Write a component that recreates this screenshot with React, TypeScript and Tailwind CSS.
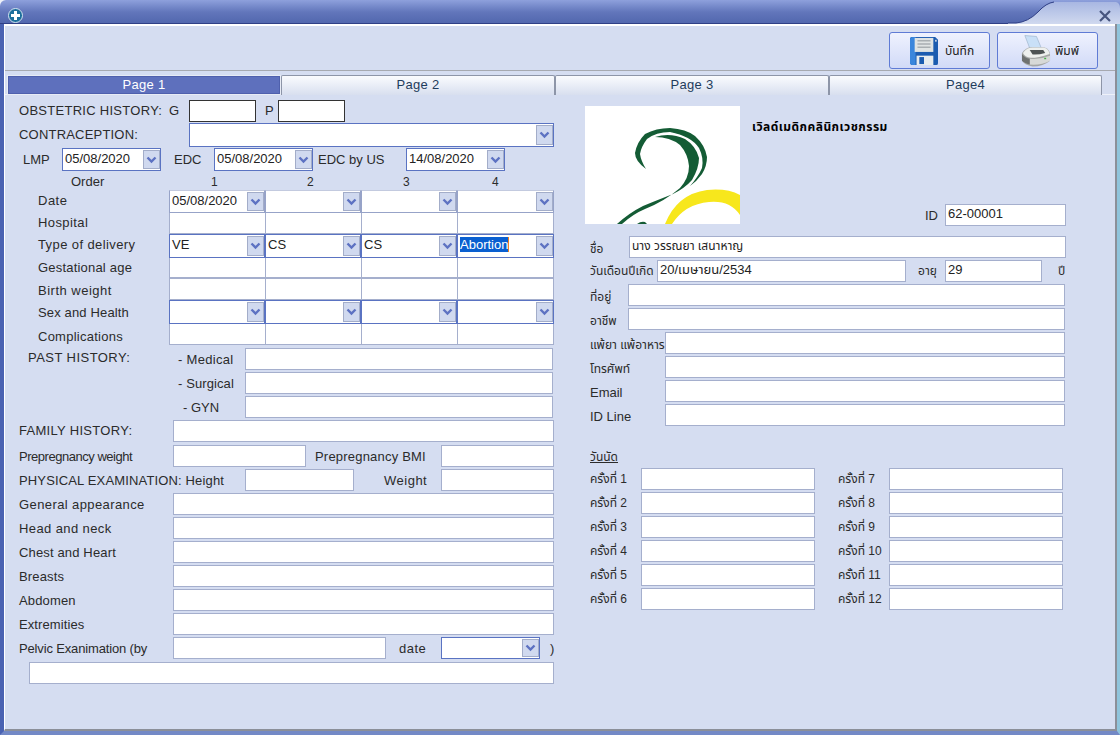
import { ReactNode } from "react";

const THAI = "font-['Liberation_Sans','Noto_Sans_Thai','Noto_Sans',sans-serif]";

const Chevron = () => (
  <svg width="11" height="8" viewBox="0 0 11 8">
    <path d="M1.5 1.5 L5.5 5.5 L9.5 1.5" fill="none" stroke="#5d72c2" strokeWidth="2.4" />
  </svg>
);

const Box = ({ className = "", dark = false, children }: { className?: string; dark?: boolean; children?: ReactNode }) => (
  <div
    className={`h-[22px] shrink-0 border bg-white px-[1px] leading-[18px] text-[#222] ${dark ? "border-[#333333]" : "border-[#a5afcd]"} ${className}`}
  >
    {children}
  </div>
);

const Select = ({ className = "", soft = false, children }: { className?: string; soft?: boolean; children?: ReactNode }) => (
  <div
    className={`flex shrink-0 items-stretch border bg-white ${soft ? "border-[#97a3c8] border-t-[#c3cadf]" : "border-[#5a73c2]"} ${className}`}
  >
    <div className="flex-1 overflow-hidden pl-[2px] leading-[19px] text-[#222]">{children}</div>
    <div className="m-[1px] mr-0 flex w-[17px] items-center justify-center border border-[#a3adc9] bg-[#d0d9ef]">
      <Chevron />
    </div>
  </div>
);

const Label = ({ className = "", children }: { className?: string; children: ReactNode }) => (
  <span className={`shrink-0 whitespace-nowrap text-[#2b2b2b] ${className}`}>{children}</span>
);

const FloppyIcon = () => (
  <svg width="28" height="28" viewBox="0 0 30 30">
    <path d="M2 0 H27 L30 3 V28 Q30 30 28 30 H3 Q0 30 0 27 V2 Q0 0 2 0 Z" fill="#1c5cb0" />
    <path d="M0 3 Q0 0 3 0 H6 V30 H3 Q0 30 0 27 Z" fill="#3a86dc" />
    <rect x="5" y="1" width="20" height="15" fill="#dfe3e3" />
    <path d="M8 4 H22 M8 7.5 H22 M8 11 H22" stroke="#a9afb2" strokeWidth="1.5" />
    <rect x="7" y="20" width="18" height="10" fill="#e8ecee" />
    <rect x="10" y="21.5" width="5" height="7.5" fill="#1c5cb0" />
    <rect x="27" y="3" width="1.5" height="2" fill="#e8ecee" />
  </svg>
);

const PrinterIcon = () => (
  <svg width="30" height="32" viewBox="0 0 31 32">
    <path d="M4 0 L16 1 L21 13 H9 Z" fill="#c9e0f7" stroke="#9db4cb" strokeWidth="0.7" />
    <path d="M1 18 Q5 12 11 12 H24 Q30 14 30 20 V26 Q23 32 12 32 Q3 30 1 26 Z" fill="#a5a7a6" />
    <path d="M2 18 Q6 12.5 12 12.5 H24 Q28.5 14 29.5 19 Q18 23 10 23 Q4 22 2 18 Z" fill="#eef0ee" />
    <path d="M9 15 H23 L25 18 Q18 20 12 19.5 Z" fill="#4e5354" />
    <path d="M9 24 Q20 25 30 21 V26 Q21 31 9 30 Z" fill="#d7d9d7" />
    <path d="M1 19 Q4 23 9 24 V30 Q3 28 1 26 Z" fill="#6e7170" />
    <rect x="24" y="23" width="2" height="1.5" fill="#46b04a" />
  </svg>
);

const Logo = () => (
  <svg className="shrink-0" width="155" height="118" viewBox="0 0 155 118">
    <rect width="155" height="118" fill="#ffffff" />
    <path
      d="M61 63 Q50 55 50 47 Q52 36 60 28 Q71 22 85 22 Q101 23 110 30 Q120 39 122 51 Q122 60 117 68 Q112 75 105 80 Q113 71 117 62 Q119 52 114 42 Q106 30 85 26 Q71 26 62 33 Q56 41 55 48 Q56 55 61 63 Z"
      fill="#145c35"
    />
    <path
      d="M70 31 Q85 26 100 33 Q111 40 114 52 Q114 62 107 74 Q100 82 88 88 Q70 95 58 100 Q44 107 32 118 H37 Q48 108 60 103 Q80 95 95 82 Q104 72 104 60 Q103 48 95 39 Q85 31 70 31 Z"
      fill="#145c35"
    />
    <path d="M52 118 Q56 115 60 116 L62 118 Z" fill="#145c35" />
    <path d="M80 118 Q92 88 122 84 Q142 82 155 89 V109 Q145 94 124 96 Q100 98 87 118 Z" fill="#f7e71c" />
  </svg>
);

const TitleBar = () => (
  <div className="relative h-[24px] shrink-0 rounded-tl-[6px] bg-gradient-to-b from-[#8ea0dc] via-[#6276bb] to-[#5166ad]">
    <svg className="absolute right-0 top-0" width="112" height="24" viewBox="0 0 112 24">
      <defs>
        <linearGradient id="cap" x1="0" y1="0" x2="0" y2="1">
          <stop offset="0" stopColor="#a8b7e2" />
          <stop offset="1" stopColor="#d0d9ef" />
        </linearGradient>
      </defs>
      <path d="M0 24 V23 H8 Q20 22 30 12 Q38 3 46 2 H108 Q112 3 112 8 V24 Z" fill="url(#cap)" />
      <path d="M0 23 H8 Q20 22 30 12 Q38 3 46 2" fill="none" stroke="#2f3f86" strokeWidth="1" />
    </svg>
    <div className="absolute bottom-0 left-0 right-[112px] h-px bg-[#2f3f86]" />
    <svg className="absolute left-[8px] top-[8px]" width="15" height="15" viewBox="0 0 15 15">
      <circle cx="7.5" cy="7.5" r="7" fill="#1d6f9c" stroke="#d4e4f0" strokeWidth="1" />
      <path d="M7.5 3 V12 M3 7.5 H12" stroke="#ffffff" strokeWidth="3" />
    </svg>
    <svg className="absolute right-[9px] top-[10px]" width="12" height="12" viewBox="0 0 12 12">
      <path d="M1 1 L11 11 M11 1 L1 11" stroke="#47557f" strokeWidth="2.2" />
    </svg>
  </div>
);

const ToolButton = ({ icon, label, className = "" }: { icon: ReactNode; label: string; className?: string }) => (
  <div
    className={`flex h-[37px] w-[101px] items-center rounded-[3px] border border-[#5f7bd5] bg-gradient-to-b from-[#eff2fe] to-[#d1daf7] text-[12px] text-[#222] ${THAI} ${className}`}
  >
    {icon}
    <span>{label}</span>
  </div>
);

const tabs = ["Page 1", "Page 2", "Page 3", "Page4"];
const tabWidths = ["w-[274px]", "w-[274px]", "w-[274px]", "w-[273px]"];

const TabStrip = () => (
  <div className="flex h-[25px] shrink-0 border-t border-b border-t-[#a6a9b0] border-b-[#eef1f9] pl-[2px] pt-[4px]">
    {tabs.map((t, i) =>
      i === 0 ? (
        <div
          key={t}
          className={`${tabWidths[i]} h-[20px] border border-[#e7ebf5] bg-[#5e70bd] text-center text-[13px] leading-[18px] tracking-[0.3px] text-white outline outline-1 -outline-offset-2 outline-[#4f60ad]`}
        >
          {t}
        </div>
      ) : (
        <div
          key={t}
          className={`${tabWidths[i]} h-[20px] rounded-t-[2px] border border-b-0 border-[#8d95a8] bg-gradient-to-b from-[#fafbfe] to-[#d8dfef] text-center text-[13px] leading-[18px] tracking-[0.3px] text-[#1f3c5c]`}
        >
          {t}
        </div>
      )
    )}
  </div>
);

const gridLabels = [
  { text: "Date", cls: "h-[22px] leading-[22px] tracking-[0.5px]" },
  { text: "Hospital", cls: "h-[22px] leading-[22px] tracking-[0.4px]" },
  { text: "Type of delivery", cls: "h-[22px] leading-[22px] tracking-[0.4px]" },
  { text: "Gestational age", cls: "h-[24px] leading-[24px] tracking-[0.2px]" },
  { text: "Birth weight", cls: "h-[22px] leading-[22px] tracking-[0.5px]" },
  { text: "Sex and Health", cls: "h-[22px] leading-[22px] tracking-[0.15px]" },
  { text: "Complications", cls: "h-[21px] leading-[26px] tracking-[0.25px]" },
];

const gridRows: { h: string; kind: "select" | "date" | "box"; values?: string[]; line?: string }[] = [
  { h: "h-[23px]", kind: "date", values: ["05/08/2020", "", "", ""] },
  { h: "h-[21px]", kind: "box", line: "border-b" },
  { h: "h-[24px]", kind: "select", values: ["VE", "CS", "CS", "Abortion"] },
  { h: "h-[21px]", kind: "box", line: "border-b-2" },
  { h: "h-[21px]", kind: "box", line: "border-b" },
  { h: "h-[24px]", kind: "select" },
  { h: "h-[21px]", kind: "box", line: "border-b" },
];

const ObstetricGrid = () => (
  <div className="flex">
    <div className="flex w-[150px] shrink-0 flex-col pl-[19px]">
      {gridLabels.map((l) => (
        <Label key={l.text} className={l.cls}>
          {l.text}
        </Label>
      ))}
    </div>
    <div className="flex w-[385px] flex-col">
      {gridRows.map((r, i) => (
        <div key={i} className={`grid grid-cols-[96px_96px_96px_97px] ${r.h}`}>
          {[0, 1, 2, 3].map((c) =>
            r.kind === "box" ? (
              <div key={c} className={`border-l border-[#a5afcd] bg-white ${r.line} ${c === 3 ? "border-r" : ""}`} />
            ) : (
              <Select key={c} soft={r.kind === "date"}>
                {r.values?.[c] === "Abortion" ? (
                  <span className="border-r border-r-[#f08020] bg-[#0a5fd0] text-white">Abortion</span>
                ) : (
                  r.values?.[c]
                )}
              </Select>
            )
          )}
        </div>
      ))}
    </div>
  </div>
);

const simpleRows = [
  { text: "General appearance", cls: "tracking-[0.4px]" },
  { text: "Head and neck", cls: "tracking-[0.4px]" },
  { text: "Chest and Heart", cls: "tracking-[0.15px]" },
  { text: "Breasts", cls: "tracking-[0.15px]" },
  { text: "Abdomen", cls: "tracking-[0.15px]" },
  { text: "Extremities", cls: "tracking-[0.1px]" },
];

const LeftColumn = () => (
  <div className="flex w-[535px] shrink-0 flex-col pt-[5px]">
    <div className="flex h-[22px] items-center">
      <Label className="w-[150px] tracking-[0.28px]">OBSTETRIC HISTORY:</Label>
      <Label className="w-[20px]">G</Label>
      <Box dark className="w-[67px]" />
      <Label className="w-[22px] pl-[9px]">P</Label>
      <Box dark className="w-[67px]" />
    </div>
    <div className="mt-[1px] flex h-[24px] items-center">
      <Label className="w-[170px] tracking-[0.2px]">CONTRACEPTION:</Label>
      <Select className="h-[24px] w-[365px]" />
    </div>
    <div className="mt-[1px] flex h-[23px] items-center">
      <Label className="w-[43px] pl-[4px]">LMP</Label>
      <Select className="h-[23px] w-[99px]">05/08/2020</Select>
      <Label className="w-[53px] pl-[13px]">EDC</Label>
      <Select className="h-[23px] w-[99px]">05/08/2020</Select>
      <Label className="w-[93px] pl-[5px]">EDC by US</Label>
      <Select className="h-[23px] w-[99px]">14/08/2020</Select>
    </div>
    <div className="flex h-[19px] items-center pt-[2px] text-[12px]">
      <Label className="w-[192px] pl-[52px] text-[13px]">Order</Label>
      <Label className="w-[96px]">1</Label>
      <Label className="w-[96px]">2</Label>
      <Label className="w-[89px]">3</Label>
      <Label>4</Label>
    </div>
    <ObstetricGrid />
    <div className="mt-[3px] flex h-[22px] items-center">
      <Label className="w-[159px] self-start pl-[9px] leading-[20px] tracking-[0.45px]">PAST HISTORY:</Label>
      <Label className="w-[67px] pt-[2px] tracking-[0.3px]">- Medical</Label>
      <Box className="w-[308px]" />
    </div>
    <div className="mt-[2px] flex h-[22px] items-center">
      <Label className="w-[226px] pl-[159px] pt-[2px] tracking-[0.1px]">- Surgical</Label>
      <Box className="w-[308px]" />
    </div>
    <div className="mt-[2px] flex h-[22px] items-center">
      <Label className="w-[226px] pl-[164px] pt-[2px]">- GYN</Label>
      <Box className="w-[308px]" />
    </div>
    <div className="mt-[2px] flex h-[22px] items-center">
      <Label className="w-[154px] tracking-[0.3px]">FAMILY HISTORY:</Label>
      <Box className="w-[381px]" />
    </div>
    <div className="mt-[3px] flex h-[22px] items-center">
      <Label className="w-[154px] pt-[2px] tracking-[-0.47px]">Prepregnancy weight</Label>
      <Box className="w-[133px]" />
      <Label className="w-[135px] pl-[9px] pt-[2px] tracking-[0.2px]">Prepregnancy BMI</Label>
      <Box className="w-[113px]" />
    </div>
    <div className="mt-[2px] flex h-[22px] items-center">
      <Label className="w-[226px] pt-[2px] tracking-[0.15px]">PHYSICAL EXAMINATION: Height</Label>
      <Box className="w-[109px]" />
      <Label className="w-[87px] pl-[30px] pt-[2px] tracking-[0.5px]">Weight</Label>
      <Box className="w-[113px]" />
    </div>
    {simpleRows.map((row) => (
      <div key={row.text} className="mt-[2px] flex h-[22px] items-center">
        <Label className={`w-[154px] pt-[2px] ${row.cls}`}>{row.text}</Label>
        <Box className="w-[381px]" />
      </div>
    ))}
    <div className="mt-[2px] flex h-[22px] items-center">
      <Label className="w-[154px] pt-[2px] tracking-[-0.15px]">Pelvic Exanimation (by</Label>
      <Box className="w-[213px]" />
      <Label className="w-[55px] pl-[13px] pt-[2px] tracking-[0.5px]">date</Label>
      <Select className="h-[22px] w-[99px]" />
      <Label className="pl-[10px] pt-[2px]">)</Label>
    </div>
    <Box className="ml-[10px] mt-[3px] w-[525px]" />
  </div>
);

const PatientRow = ({
  label,
  value,
  labelW,
  boxW,
  thai = true,
}: {
  label: string;
  value?: string;
  labelW: string;
  boxW: string;
  thai?: boolean;
}) => (
  <div className="mt-[2px] flex h-[22px] items-center">
    <Label className={`${labelW} pl-[5px] pt-[4px] ${thai ? "text-[12px]" : ""}`}>{label}</Label>
    <Box className={`${boxW} pl-[2px]`}>{value}</Box>
  </div>
);

const visits = [
  [1, 7],
  [2, 8],
  [3, 9],
  [4, 10],
  [5, 11],
  [6, 12],
];

const RightColumn = () => (
  <div className={`ml-[31px] flex w-[481px] shrink-0 flex-col pt-[11px] ${THAI}`}>
    <div className="flex h-[120px]">
      <Logo />
      <div className="flex flex-1 flex-col pl-[12px]">
        <div className="pt-[12px] text-[12px] font-bold tracking-[0.45px] text-black">เวิลด์เมดิกคลินิกเวชกรรม</div>
        <div className="mt-auto flex h-[22px] items-center justify-end">
          <Label className="pr-[7px] pt-[2px]">ID</Label>
          <Box className="w-[121px] pl-[2px]">62-00001</Box>
        </div>
      </div>
    </div>
    <div className="mt-[10px] flex h-[22px] items-center">
      <Label className="w-[44px] pl-[5px] pt-[4px] text-[12px]">ชื่อ</Label>
      <Box className="w-[437px] pl-[2px] text-[12px]">นาง วรรณยา เสนาหาญ</Box>
    </div>
    <div className="mt-[2px] flex h-[22px] items-center">
      <Label className="w-[72px] pl-[5px] text-[12px]">วันเดือนปีเกิด</Label>
      <Box className="w-[249px] pl-[2px]">20/เมษายน/2534</Box>
      <Label className="w-[39px] pl-[12px] text-[12px]">อายุ</Label>
      <Box className="w-[97px] pl-[2px]">29</Box>
      <Label className="pl-[16px] text-[12px]">ปี</Label>
    </div>
    <PatientRow label="ที่อยู่" labelW="w-[43px]" boxW="w-[437px]" />
    <PatientRow label="อาชีพ" labelW="w-[43px]" boxW="w-[437px]" />
    <PatientRow label="แพ้ยา แพ้อาหาร" labelW="w-[80px]" boxW="w-[400px]" />
    <PatientRow label="โทรศัพท์" labelW="w-[80px]" boxW="w-[400px]" />
    <PatientRow label="Email" labelW="w-[80px]" boxW="w-[400px]" thai={false} />
    <PatientRow label="ID Line" labelW="w-[80px]" boxW="w-[400px]" thai={false} />
    <div className="mt-[22px] h-[18px] pl-[5px] text-[12px] leading-[18px] text-[#2b2b2b] underline">วันนัด</div>
    {visits.map(([a, b]) => (
      <div key={a} className="mt-[2px] flex h-[22px] items-center">
        <Label className="w-[56px] pl-[5px] text-[12px]">ครั้งที่ {a}</Label>
        <Box className="w-[174px]" />
        <Label className="w-[74px] pl-[23px] text-[12px]">ครั้งที่ {b}</Label>
        <Box className="w-[174px]" />
      </div>
    ))}
  </div>
);

const App = () => (
  <div className="flex h-[735px] w-[1120px] flex-col overflow-hidden bg-[#eef1f8] font-['Liberation_Sans',sans-serif] text-[13px]">
    <TitleBar />
    <div className="flex min-h-0 flex-1 border-b-[4px] border-l-[4px] border-r-[3px] border-b-[#7389c6] border-l-[#4a62b2] border-r-[#8fc4dc] bg-[#d5ddf1]">
      <div className="flex min-w-0 flex-1 flex-col border-b-2 border-l border-r-2 border-b-[#8b8f99] border-l-white border-r-[#8b8f99]">
        <div className="flex h-[41px] shrink-0 justify-end gap-[7px] border-t-[2px] border-t-white pr-[17px] pt-[6px]">
          <ToolButton className="gap-[7px] pl-[20px]" icon={<FloppyIcon />} label="บันทึก" />
          <ToolButton className="gap-[4px] pl-[23px]" icon={<PrinterIcon />} label="พิมพ์" />
        </div>
        <div className="h-[5px] shrink-0" />
        <TabStrip />
        <div className="flex min-h-0 flex-1 pl-[14px]">
          <LeftColumn />
          <RightColumn />
        </div>
      </div>
    </div>
  </div>
);

export default App;
